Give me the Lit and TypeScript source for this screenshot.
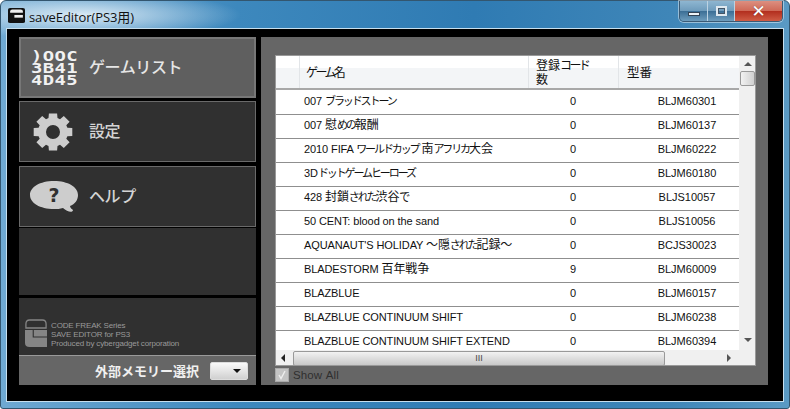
import { LitElement, html, css, svg } from "lit";
import { customElement } from "lit/decorators.js";

const ROWS: [string, string, string][] = [
  ["007 ブラッドストーン", "0", "BLJM60301"],
  ["007 慰めの報酬", "0", "BLJM60137"],
  ["2010 FIFA ワールドカップ 南アフリカ大会", "0", "BLJM60222"],
  ["3Dドットゲームヒーローズ", "0", "BLJM60180"],
  ["428 封鎖された渋谷で", "0", "BLJS10057"],
  ["50 CENT: blood on the sand", "0", "BLJS10056"],
  ["AQUANAUT'S HOLIDAY 〜隠された記録〜", "0", "BCJS30023"],
  ["BLADESTORM 百年戦争", "9", "BLJM60009"],
  ["BLAZBLUE", "0", "BLJM60157"],
  ["BLAZBLUE CONTINUUM SHIFT", "0", "BLJM60238"],
  ["BLAZBLUE CONTINUUM SHIFT EXTEND", "0", "BLJM60394"],
];

/* The reference font has condensed kana: split runs so kana can be tightened. */
function runs(s: string) {
  return s.split(/([\u3040-\u30ff]+|[\u3000-\u303f\u4e00-\u9fff]+)/).filter(Boolean).map((t) => {
    if (/^[\u3040-\u30ff]/.test(t)) return html`<span class="kana">${t}</span>`;
    if (/^[\u3000-\u303f\u4e00-\u9fff]/.test(t)) return html`<span class="kanji">${t}</span>`;
    return t;
  });
}

function gearPath(): string {
  const cx = 20, cy = 20, teeth = 8;
  const pts: string[] = [];
  for (let i = 0; i < teeth; i++) {
    const a = (i * Math.PI * 2) / teeth - Math.PI / 2;
    const spread = 0.21;
    const base = 0.3;
    const p = (r: number, t: number) =>
      `${(cx + r * Math.cos(t) * 1.04).toFixed(1)} ${(cy + r * Math.sin(t)).toFixed(1)}`;
    pts.push(p(14.5, a - base), p(19, a - spread), p(19, a + spread), p(14.5, a + base));
  }
  return `M${pts.join("L")}Z M${cx + 7} ${cy}a7 7 0 1 0 -14 0a7 7 0 1 0 14 0Z`;
}

const logoMark = (c: string, hole: string) => svg`
  <path d="M1 9 V5 Q1 1 5 1 H19 Q23 1 23 5 V9 Z" fill="none" stroke=${c} stroke-width="1.4"/>
  <path d="M0 11 H24 V28 H5 Q0 28 0 24 Z" fill=${c}/>
  <path d="M9 11 V18 H24" fill="none" stroke=${hole} stroke-width="1.2"/>
`;

@customElement("app-root")
export class AppRoot extends LitElement {
  static styles = css`
    :host { display: block; width: 790px; height: 409px; overflow: hidden; font-family: "Liberation Sans", "Noto Sans CJK JP", sans-serif; }
    .window {
      width: 790px; height: 409px; box-sizing: border-box; display: flex; flex-direction: column;
      background:
        radial-gradient(ellipse 160px 24px at 80px 14px, rgba(225,238,247,.95), rgba(225,238,247,0) 100%),
        linear-gradient(90deg, #6fa9d2 0%, #3d88bd 30%, #2f7bb3 60%, #3f86b8 85%, #5a9ac4 100%);
      border: 1px solid #33566f; border-radius: 6px 6px 3px 3px;
    }
    .titlebar { height: 28px; flex: none; display: flex; align-items: flex-start; padding-left: 7px; }
    .appicon { width: 17px; height: 15px; margin-top: 7px; flex: none; }
    .title { margin: 6px 0 0 4px; font: 13px "Open Sans", "Noto Sans CJK JP", sans-serif; color: #111; letter-spacing: -.1px; }
    .controls { margin-left: auto; margin-right: 6px; display: flex; height: 20px; border: 1px solid #3a5a75; border-top: 0; border-radius: 0 0 5px 5px; overflow: hidden; box-shadow: 0 0 0 1px rgba(255,255,255,.45); }
    .ctl { display: flex; align-items: center; justify-content: center; height: 100%; box-sizing: border-box; border-right: 1px solid #bcd2e2; background: linear-gradient(180deg, #8eb6d1 0%, #6f9cbc 48%, #3c6f96 52%, #6e9dbd 100%); }
    .ctl.min { width: 28px; } .ctl.max { width: 27px; }
    .ctl.close { width: 47px; border-right: 0; background: linear-gradient(180deg, #dc8f80 0%, #cf6a58 48%, #b32f1f 52%, #cf5c45 100%); }
    .minbar { width: 12px; height: 4px; margin-top: 5px; background: #eef3f7; border: 1px solid #345; box-sizing: border-box; }
    .maxbox { width: 11px; height: 10px; box-sizing: border-box; border: 2px solid #dfe9f0; outline: 1px solid #456; outline-offset: -3px; }
    .x { color: #fff; font: bold 17px "DejaVu Sans", sans-serif; text-shadow: 0 0 1px #622; line-height: 1; }
    .client { flex: none; width: 776px; height: 372px; margin-left: 6px; box-sizing: border-box; background: #000; padding: 8px 15px 16px 12px; display: flex; gap: 5px; outline: 1px solid #c7dfee; }
    .side { width: 237px; flex: none; display: flex; flex-direction: column; }
    .nav { box-sizing: border-box; height: 61px; flex: none; display: flex; align-items: center; background: #303030; border: 1px solid #6a6a6a; color: #d4d4d4; font: 500 16px "Noto Sans CJK JP", sans-serif; }
    .nav.active { background: #5f5f5f; border: 2px solid #777; color: #e6e6e6; }
    .nav + .nav { margin-top: 3px; }
    .nav.third { margin-top: 4px; }
    .ic { width: 68px; flex: none; display: flex; justify-content: center; }
    .hex { width: 46px; height: 36px; margin: 0 12px 0 10px; overflow: hidden; font: bold 14px/12px "DejaVu Sans Mono", monospace; color: #f2f2f2; white-space: pre; flex: none; }
    .hex div { letter-spacing: .3px; transform: scaleX(1.35); transform-origin: left center; }
    .label { letter-spacing: -.4px; padding-left: 1px; padding-bottom: 3px; }
    .nav.active .label { padding-left: 0; }
    .blank { flex: 1; background: #303030; margin-top: 1px; }
    .brand { height: 57px; flex: none; margin-top: 3px; background: #303030; display: flex; align-items: flex-end; padding: 0 0 8px 6px; box-sizing: border-box; gap: 4px; }
    .brandmark { width: 22px; height: 28px; flex: none; }
    .brandtext { font: 8px/9px "Liberation Sans", sans-serif; color: #9a9a9a; letter-spacing: -.15px; white-space: nowrap; margin-bottom: -1px; }
    .ext { height: 30px; flex: none; background: #666; border-top: 1px solid #9a9a9a; box-sizing: border-box; display: flex; align-items: center; justify-content: flex-end; padding-right: 8px; gap: 11px; color: #f0f0f0; font: bold 13px "Noto Sans CJK JP", sans-serif; }
    .combo { width: 38px; height: 18px; box-sizing: border-box; border-radius: 2px; background: linear-gradient(180deg, #fafafa, #d0d0d0); border: 1px solid #ddd; display: flex; align-items: center; justify-content: flex-end; padding-right: 6px; }
    .caret { width: 0; height: 0; border: 4px solid transparent; border-top: 4px solid #111; border-bottom: 0; }
    .main { width: 507px; flex: none; background: #666; padding: 18px 12px 0 14px; box-sizing: border-box; display: flex; flex-direction: column; }
    .grid { width: 481px; height: 311px; flex: none; background: #fff; display: flex; flex-direction: column; outline: 1px solid #999; outline-offset: -1px; }
    .top { flex: 1; min-height: 0; display: flex; }
    .list { width: 464px; flex: none; overflow: hidden; }
    .head, .row { display: grid; grid-template-columns: 25px 229px 90px 120px; }
    .head { height: 35px; box-sizing: border-box; border-bottom: 2px solid #a8a8a8; background: linear-gradient(180deg, #fff 0 40%, #f3f5f7 40% 100%); font: 12px/14px "Noto Sans CJK JP", sans-serif; color: #111; }
    .head > div { border-right: 1px solid #e2e5e8; display: flex; align-items: center; box-sizing: border-box; }
    .head .kana { font-size: 12px; letter-spacing: -2.6px; }
    .head .kanji { font-size: 12px; }
    .head .hname { padding-left: 6px; padding-top: 1px; }
    .head .hcount { padding-left: 7px; }
    .head .hmodel { padding-left: 8px; padding-top: 1px; border-right: 0; }
    .head .hmodel .kanji { font-size: 12.5px; }
    .rows { border-top: 1px solid #fff; }
    .row { height: 24px; box-sizing: border-box; border-bottom: 1px solid #8f8f8f; font: 11px/21px "Liberation Sans", "Noto Sans CJK JP", sans-serif; color: #111; }
    .row .kana { font-size: 11px; letter-spacing: -2.1px; }
    .row .kanji { font-size: 12px; }
    .name { padding-left: 4px; white-space: nowrap; letter-spacing: -.1px; }
    .count { text-align: center; padding-right: 2px; box-sizing: border-box; }
    .model { text-align: center; padding-left: 16px; box-sizing: border-box; }
    .vbar { width: 17px; flex: none; background: #f0f0f0; display: flex; flex-direction: column; align-items: center; }
    .arrow { width: 0; height: 0; border: 4px solid transparent; flex: none; }
    .up { border-bottom: 4px solid #555; border-top: 0; margin-top: 7px; }
    .vthumb { width: 15px; height: 15px; margin-top: 5px; box-sizing: border-box; border: 1px solid #999; border-radius: 2px; background: linear-gradient(90deg, #f2f2f2, #d0d0d0); flex: none; }
    .down { border-top: 4px solid #555; border-bottom: 0; margin-top: auto; margin-bottom: 8px; }
    .hbar { height: 16px; flex: none; background: #f0f0f0; display: flex; align-items: center; }
    .left { border-right: 4px solid #222; border-left: 0; margin-left: 6px; }
    .hthumb { width: 372px; height: 15px; margin-left: 8px; box-sizing: border-box; border: 1px solid #999; border-radius: 2px; background: linear-gradient(180deg, #f2f2f2, #c8c8c8); display: flex; align-items: center; justify-content: center; flex: none; font: 9px "Liberation Sans", sans-serif; color: #444; }
    .right { border-left: 4px solid #555; border-right: 0; margin-left: 62px; }
    .show { display: flex; align-items: center; gap: 4px; height: 18px; font: 11.5px "Liberation Sans", sans-serif; color: #2f2f2f; letter-spacing: .1px; word-spacing: 1px; }
    .chk { width: 12px; height: 12px; border: 1px solid #aaa; background: #c4c4c4; display: flex; align-items: center; justify-content: center; }
  `;

  render() {
    return html`<div class="window">
      <div class="titlebar">
        <svg class="appicon" viewBox="0 0 24 28" preserveAspectRatio="none">
          <rect width="24" height="28" rx="3" fill="#111"/>
          <path d="M3 9 V6 Q3 3 6 3 H18 Q21 3 21 6 V9 Z" fill="#eee"/>
          <rect x="9" y="13" width="12" height="5" fill="#eee"/>
        </svg>
        <span class="title">saveEditor(PS3用)</span>
        <div class="controls">
          <div class="ctl min"><div class="minbar"></div></div>
          <div class="ctl max"><div class="maxbox"></div></div>
          <div class="ctl close"><span class="x">✕</span></div>
        </div>
      </div>
      <div class="client">
        <div class="side">
          <div class="nav active">
            <div class="hex"><div>)OOC</div><div>3B41</div><div>4D45</div></div>
            <span class="label">ゲームリスト</span>
          </div>
          <div class="nav">
            <div class="ic"><svg width="42" height="40" viewBox="0 0 42 40"><path d=${gearPath()} fill="#cdcdcd" fill-rule="evenodd"/></svg></div>
            <span class="label">設定</span>
          </div>
          <div class="nav third">
            <div class="ic"><svg width="50" height="34" viewBox="0 0 50 34">
              <path d="M25 1 C39 1 49 7 49 15 C49 20 46 24 41 26 C41 28 43 29 44 30 C44 33 38 32 34 28 C31 29 28 29 25 29 C11 29 1 23 1 15 C1 7 11 1 25 1 Z" fill="#cdcdcd"/>
              <text x="25" y="22" text-anchor="middle" font-family="DejaVu Sans" font-weight="bold" font-size="19" fill="#303030">?</text>
            </svg></div>
            <span class="label">ヘルプ</span>
          </div>
          <div class="blank"></div>
          <div class="brand">
            <svg class="brandmark" viewBox="0 0 24 28" preserveAspectRatio="none">${logoMark("#858585", "#303030")}</svg>
            <div class="brandtext">CODE FREAK Series<br>SAVE EDITOR for PS3<br>Produced by cybergadget corporation</div>
          </div>
          <div class="ext"><span>外部メモリー選択</span><div class="combo"><div class="caret"></div></div></div>
        </div>
        <div class="main">
          <div class="grid">
            <div class="top">
              <div class="list">
                <div class="head">
                  <div></div>
                  <div class="hname"><span>${runs("ゲーム名")}</span></div>
                  <div class="hcount"><span>${runs("登録コード")}<br>${runs("数")}</span></div>
                  <div class="hmodel"><span>${runs("型番")}</span></div>
                </div>
                <div class="rows">
                  ${ROWS.map(([n, c, m]) => html`<div class="row">
                    <div></div><div class="name">${runs(n)}</div><div class="count">${c}</div><div class="model">${m}</div>
                  </div>`)}
                </div>
              </div>
              <div class="vbar">
                <div class="arrow up"></div>
                <div class="vthumb"></div>
                <div class="arrow down"></div>
              </div>
            </div>
            <div class="hbar">
              <div class="arrow left"></div>
              <div class="hthumb">III</div>
              <div class="arrow right"></div>
            </div>
          </div>
          <div class="show">
            <div class="chk"><svg width="10" height="10" viewBox="0 0 10 10"><path d="M2 5 L4 8.5 L8 1" fill="none" stroke="#eee" stroke-width="1.4"/></svg></div>
            <span>Show All</span>
          </div>
        </div>
      </div>
    </div>`;
  }
}
